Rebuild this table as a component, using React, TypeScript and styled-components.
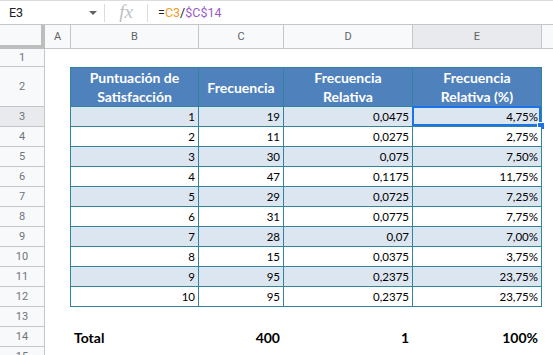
import styled, { createGlobalStyle } from "styled-components";

const GlobalStyle = createGlobalStyle`
  html, body {
    margin: 0;
    padding: 0;
    background: #ffffff;
  }
  body {
    width: 553px;
    height: 355px;
    overflow: hidden;
    font-family: Roboto, "Liberation Sans", Arial, sans-serif;
  }
  * {
    box-sizing: border-box;
  }
`;

const BLUE = "#4f81bd";
const TEAL = "#31849b";
const STRIPE = "#dce6f1";
const GRID = "#c4c7c5";

// column widths (border-box, right border included)
const colHeaders = [
  { label: "A", width: 26 },
  { label: "B", width: 128 },
  { label: "C", width: 85 },
  { label: "D", width: 129 },
  { label: "E", width: 129, active: true },
];
const rowHeights = [18, 40, 20, 20, 20, 20, 20, 20, 20, 20, 20, 20, 20, 20, 20];

const rows = [
  ["1", "19", "0,0475", "4,75%"],
  ["2", "11", "0,0275", "2,75%"],
  ["3", "30", "0,075", "7,50%"],
  ["4", "47", "0,1175", "11,75%"],
  ["5", "29", "0,0725", "7,25%"],
  ["6", "31", "0,0775", "7,75%"],
  ["7", "28", "0,07", "7,00%"],
  ["8", "15", "0,0375", "3,75%"],
  ["9", "95", "0,2375", "23,75%"],
  ["10", "95", "0,2375", "23,75%"],
];

export default function App() {
  return (
    <Page>
      <GlobalStyle />
      <FormulaBar>
        <NameBox>
          E3
          <Caret />
        </NameBox>
        <Divider />
        <FxIcon>fx</FxIcon>
        <Divider />
        <Formula>
          =<RefA>C3</RefA>/<RefB>$C$14</RefB>
        </Formula>
      </FormulaBar>

      <HeaderBar>
        <Corner />
        {colHeaders.map((c) => (
          <ColHeader key={c.label} $width={c.width} $active={c.active}>
            {c.label}
          </ColHeader>
        ))}
        <ColHeader $fill />
      </HeaderBar>

      <Grid>
        <RowHeaders>
          {rowHeights.map((h, i) => (
            <RowHeader key={i} $height={h} $active={i === 2}>
              {i + 1}
            </RowHeader>
          ))}
        </RowHeaders>

        <Body>
          <Spacer $height={18} />
          <Table>
            <HeadCell>
              Puntuación de
              <br />
              Satisfacción
            </HeadCell>
            <HeadCell>Frecuencia</HeadCell>
            <HeadCell>
              Frecuencia
              <br />
              Relativa
            </HeadCell>
            <HeadCell>
              Frecuencia
              <br />
              Relativa (%)
            </HeadCell>
            {rows.map((r, i) =>
              r.map((v, j) => (
                <Cell key={i + "-" + j} $striped={i % 2 === 0}>
                  {v}
                  {i === 0 && j === 3 && (
                    <Selection>
                      <Handle />
                    </Selection>
                  )}
                </Cell>
              ))
            )}
          </Table>
          <Spacer $height={20} />
          <TotalRow>
            <TotalCell $left>Total</TotalCell>
            <TotalCell>400</TotalCell>
            <TotalCell>1</TotalCell>
            <TotalCell>100%</TotalCell>
          </TotalRow>
        </Body>
      </Grid>
    </Page>
  );
}

const Page = styled.div`
  width: 553px;
  height: 355px;
  overflow: hidden;
  background: #fff;
`;

const FormulaBar = styled.div`
  height: 25px;
  display: flex;
  align-items: center;
  border-top: 1px solid #dadce0;
  border-bottom: 1px solid ${GRID};
  background: #fff;
`;

const NameBox = styled.div`
  width: 104px;
  display: flex;
  align-items: center;
  justify-content: space-between;
  padding: 0 7px 0 9px;
  font-size: 12.5px;
  color: #202124;
`;

const Caret = styled.span`
  width: 0;
  height: 0;
  border-left: 4px solid transparent;
  border-right: 4px solid transparent;
  border-top: 4px solid #5f6368;
`;

const Divider = styled.span`
  width: 1px;
  height: 18px;
  background: #dadce0;
`;

const FxIcon = styled.span`
  width: 42px;
  text-align: center;
  font-family: "Liberation Serif", "DejaVu Serif", serif;
  font-style: italic;
  font-size: 19px;
  color: #bdc1c6;
  line-height: 1;
  padding-bottom: 2px;
`;

const Formula = styled.div`
  padding-left: 10px;
  font-size: 12.5px;
  color: #202124;
`;

const RefA = styled.span`
  color: #f59a23;
`;

const RefB = styled.span`
  color: #9a5bc6;
`;

const HeaderBar = styled.div`
  display: flex;
  height: 24px;
  border-bottom: 1px solid ${GRID};
`;

const Corner = styled.div`
  width: 45px;
  flex: none;
  background: #f8f9fa;
  border-right: 4px solid #bdbdbd;
  border-bottom: 4px solid #bdbdbd;
  margin-bottom: -1px;
`;

const ColHeader = styled.div<{ $width?: number; $active?: boolean; $fill?: boolean }>`
  width: ${({ $width }) => ($width ? $width + "px" : "auto")};
  flex: ${({ $fill }) => ($fill ? "1" : "none")};
  display: flex;
  align-items: center;
  justify-content: center;
  font-size: 11px;
  color: #5f6368;
  background: ${({ $active }) => ($active ? "#e8eaed" : "#f8f9fa")};
  border-right: ${({ $fill }) => ($fill ? "none" : `1px solid ${GRID}`)};
`;

const Grid = styled.div`
  display: flex;
`;

const RowHeaders = styled.div`
  width: 45px;
  flex: none;
  display: flex;
  flex-direction: column;
`;

const RowHeader = styled.div<{ $height: number; $active?: boolean }>`
  height: ${({ $height }) => $height}px;
  flex: none;
  display: flex;
  align-items: center;
  justify-content: center;
  font-size: 11px;
  color: #70757a;
  background: ${({ $active }) => ($active ? "#e8eaed" : "#f8f9fa")};
  border-right: 1px solid ${GRID};
  border-bottom: 1px solid ${GRID};
`;

const Body = styled.div`
  flex: 1;
  padding-left: 25px;
  display: flex;
  flex-direction: column;
`;

const Spacer = styled.div<{ $height: number }>`
  height: ${({ $height }) => $height}px;
  flex: none;
`;

const Table = styled.div`
  display: grid;
  grid-template-columns: 128px 85px 129px 129px;
  grid-template-rows: 39px repeat(10, 20px);
  width: max-content;
  border-left: 1px solid ${TEAL};
  border-top: 1px solid ${TEAL};
  font-family: Lato, "Liberation Sans", sans-serif;
`;

const HeadCell = styled.div`
  display: flex;
  align-items: center;
  justify-content: center;
  text-align: center;
  background: ${BLUE};
  color: #fff;
  font-weight: 700;
  font-size: 14px;
  line-height: 19px;
  border-right: 1px solid ${TEAL};
  border-bottom: 1px solid ${TEAL};
`;

const Cell = styled.div<{ $striped?: boolean }>`
  position: relative;
  display: flex;
  align-items: flex-end;
  justify-content: flex-end;
  padding: 0 3px 3px 0;
  font-size: 11.5px;
  color: #000;
  background: ${({ $striped }) => ($striped ? STRIPE : "#fff")};
  border-right: 1px solid ${TEAL};
  border-bottom: 1px solid ${TEAL};
`;

const Selection = styled.div`
  position: absolute;
  top: -1px;
  left: -1px;
  right: 0;
  bottom: 0;
  border: 2px solid #1a73e8;
  pointer-events: none;
`;

const Handle = styled.span`
  position: absolute;
  right: -6px;
  bottom: -6px;
  width: 8px;
  height: 8px;
  background: #1a73e8;
  border: 1px solid #fff;
`;

const TotalRow = styled.div`
  display: grid;
  grid-template-columns: 128px 85px 129px 129px;
  height: 20px;
  margin-left: 1px;
  font-family: Lato, "Liberation Sans", sans-serif;
  font-weight: 700;
  font-size: 14px;
  color: #000;
`;

const TotalCell = styled.div<{ $left?: boolean }>`
  display: flex;
  align-items: center;
  justify-content: ${({ $left }) => ($left ? "flex-start" : "flex-end")};
  padding: ${({ $left }) => ($left ? "0 0 0 3px" : "0 4px 0 0")};
`;
